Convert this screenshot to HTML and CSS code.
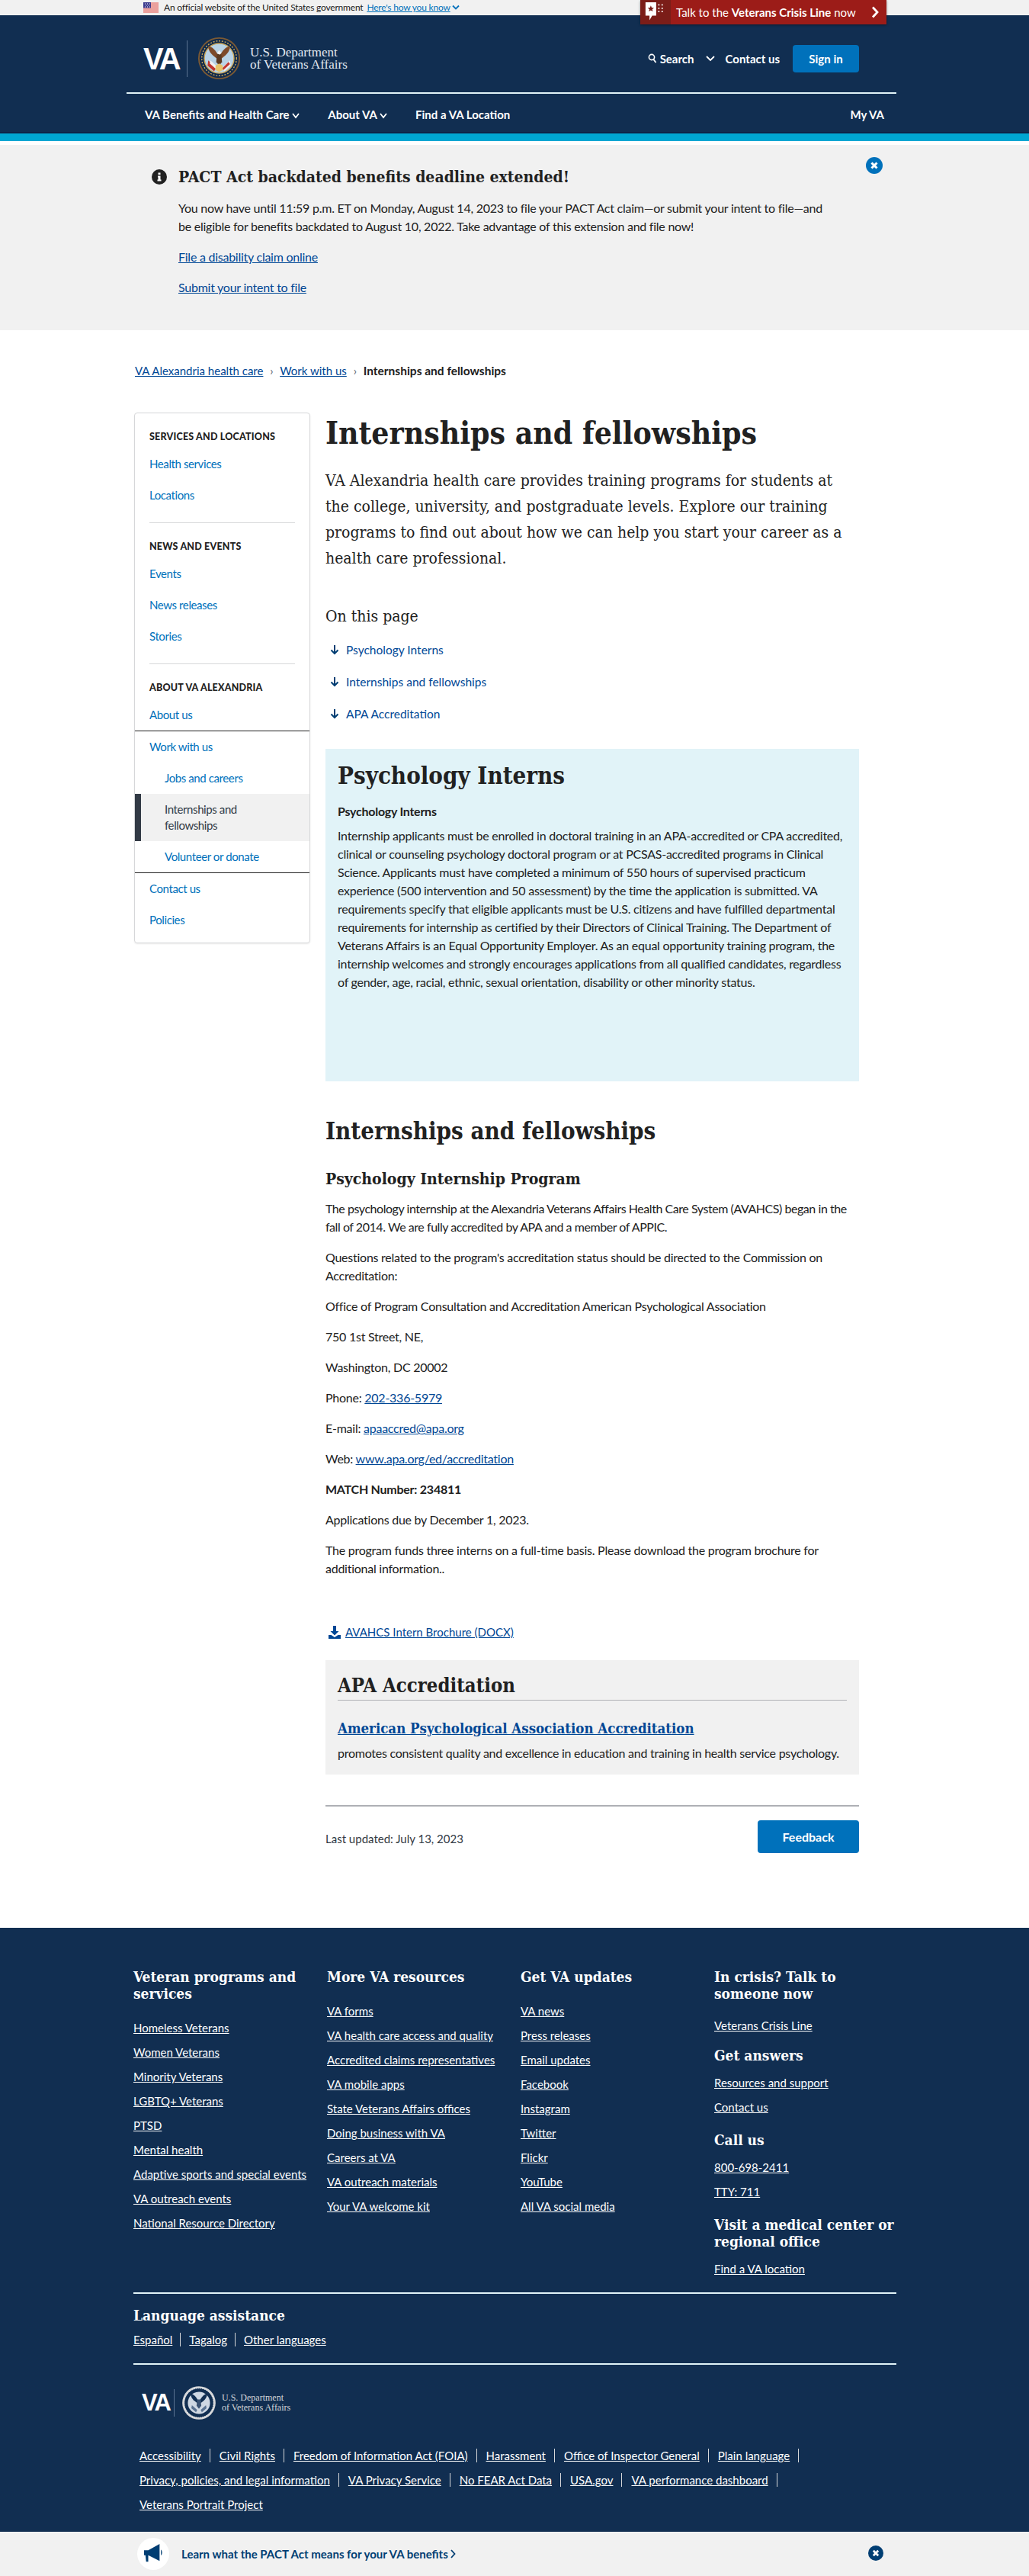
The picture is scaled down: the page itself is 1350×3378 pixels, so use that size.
FILE: index.html
```html
<!DOCTYPE html>
<html lang="en">

<head>
    <meta charset="UTF-8">
    <meta name="viewport" content="width=device-width, initial-scale=1.0">
    <title>Internships and fellowships | VA Alexandria health care</title>
    <link rel="stylesheet" href="styles.css">
</head>

<body>
    <div class="top-bar">
        <svg class="flag" viewBox="0 0 20 14" width="20" height="14">
            <rect width="20" height="14" fill="#fff"/>
            <path d="M0 1h20M0 3h20M0 5h20M0 7h20M0 9h20M0 11h20M0 13h20" stroke="#d8453d" stroke-width="1.1"/>
            <rect width="10" height="7.5" fill="#3c3b8e"/>
            <path d="M2 2h1M5 2h1M8 2h1M3.500 4h1M6.500 4h1M2 6h1M5 6h1M8 6h1" stroke="#fff" stroke-width="1"/>
        </svg>
        <span class="official">An official website of the United States government</span>
        <a class="how-know" href="#">Here's how you know</a>
        <svg class="how-chevron" viewBox="0 0 10 8" width="10" height="8"><path d="M1 1.500l4 4 4-4" fill="none" stroke="#0071bb" stroke-width="1.800"/></svg>
    </div>

    <a class="crisis" href="#">
        <span class="crisis-icon">
            <svg viewBox="0 0 32 34" width="28" height="30">
                <path d="M1 2h16v20h-6l-4 7v-7H1z" fill="#fff"/>
                <path d="M9 7l1.300 3.200 3.400.2-2.600 2.200.9 3.300L9 14l-3 1.900.9-3.300-2.600-2.200 3.400-.2z" fill="#7b1d18"/>
                <path d="M20 5h2v2h-2zM25 5h2v2h-2zM20 10h2v2h-2zM25 10h2v2h-2zM20 15h2v2h-2zM25 15h2v2h-2z" fill="#fff"/>
            </svg>
        </span>
        <span class="crisis-text">Talk to the <strong>Veterans Crisis Line</strong> now</span>
        <svg class="crisis-chevron" viewBox="0 0 10 16" width="10" height="16"><path d="M2 1.500l6 6.500-6 6.500" fill="none" stroke="#fff" stroke-width="2.800"/></svg>
    </a>

    <header class="site-header">
        <div class="head-row">
            <a class="logo" href="#">
                <span class="logo-va">VA</span>
                <span class="logo-line"></span>
                <svg class="seal" viewBox="0 0 60 60" width="57" height="57">
                    <circle cx="30" cy="30" r="29" fill="#7c5a34"/>
                    <circle cx="30" cy="30" r="27" fill="#122b4c"/>
                    <circle cx="30" cy="30" r="20.500" fill="#b9d3e6" stroke="#c9a659" stroke-width="1.500"/>
                    <circle cx="30" cy="30" r="24" fill="none" stroke="#c9a659" stroke-width="1.500" stroke-dasharray="2 2"/>
                    <path d="M28 31C22 27 15 22 15 13c5 1 11 6 14 14z" fill="#7d4a2a"/>
                    <path d="M32 31C38 27 45 22 45 13c-5 1-11 6-14 14z" fill="#7d4a2a"/>
                    <path d="M27 24h6l1 11-4 5-4-5z" fill="#5b3a22"/>
                    <path d="M27 23l3-4 3 3-2 3z" fill="#f2f2f2"/>
                    <path d="M15 33l11 10-3 5-9-8z" fill="#c1362e"/>
                    <path d="M18 33l10 9-2 3-9-8z" fill="#f2f2f2"/>
                    <path d="M45 33l-11 10 3 5 9-8z" fill="#f2f2f2"/>
                    <path d="M43 35l-9 9 2 2 9-8z" fill="#c1362e"/>
                    <path d="M30 37l5 3v6l-5 3-5-3v-6z" fill="#e7c46a"/>
                </svg>
                <span class="logo-text">U.S. Department<br>of Veterans Affairs</span>
            </a>
            <div class="head-actions">
                <a class="head-link search-link" href="#">
                    <svg viewBox="0 0 12 14" width="12" height="14"><circle cx="5" cy="5" r="3.600" fill="none" stroke="#fff" stroke-width="1.600"/><path d="M7.500 8l3 4" stroke="#fff" stroke-width="1.800"/></svg>
                    Search
                    <svg class="search-chev" viewBox="0 0 12 8" width="12" height="8"><path d="M1 1l5 5 5-5" fill="none" stroke="#fff" stroke-width="1.800"/></svg>
                </a>
                <a class="head-link" href="#">Contact us</a>
                <a class="sign-in" href="#">Sign in</a>
            </div>
        </div>
        <nav class="main-nav">
            <a href="#">VA Benefits and Health Care <svg viewBox="0 0 10 8" width="10" height="8"><path d="M1 1l4 5 4-5" fill="none" stroke="#fff" stroke-width="1.800"/></svg></a>
            <a href="#">About VA <svg viewBox="0 0 10 8" width="10" height="8"><path d="M1 1l4 5 4-5" fill="none" stroke="#fff" stroke-width="1.800"/></svg></a>
            <a href="#">Find a VA Location</a>
            <a class="my-va" href="#">My VA</a>
        </nav>
    </header>
    <div class="stripe"></div>

    <section class="alert">
        <svg class="alert-info" viewBox="0 0 20 20" width="20" height="20">
            <circle cx="10" cy="10" r="10" fill="#212121"/>
            <path d="M8.500 4.500h3v2.500h-3zM8 8.500h3.500v5h1V15.500H7.500v-2h1v-3H8z" fill="#fff"/>
        </svg>
        <div class="alert-body">
            <h2 class="alert-title">PACT Act backdated benefits deadline extended!</h2>
            <p class="alert-text">You now have until 11:59 p.m. ET on Monday, August 14, 2023 to file your PACT Act claim—or submit your intent to file—and be eligible for benefits backdated to August 10, 2022. Take advantage of this extension and file now!</p>
            <p class="alert-link"><a href="#">File a disability claim online</a></p>
            <p class="alert-link"><a href="#">Submit your intent to file</a></p>
        </div>
        <svg class="close-icon alert-close" viewBox="0 0 22 22" width="22" height="22">
            <circle cx="11" cy="11" r="11" fill="#0071bb"/>
            <path d="M7.500 7.500l7 7M14.500 7.500l-7 7" stroke="#fff" stroke-width="3"/>
        </svg>
    </section>

    <nav class="breadcrumb">
        <a href="#">VA Alexandria health care</a>
        <span class="crumb-sep">›</span>
        <a href="#">Work with us</a>
        <span class="crumb-sep">›</span>
        <strong>Internships and fellowships</strong>
    </nav>

    <div class="page">
        <aside class="sidenav">
            <h4 class="side-head first">Services and locations</h4>
            <a class="side-link" href="#">Health services</a>
            <a class="side-link" href="#">Locations</a>
            <hr class="side-rule">
            <h4 class="side-head">News and events</h4>
            <a class="side-link" href="#">Events</a>
            <a class="side-link" href="#">News releases</a>
            <a class="side-link" href="#">Stories</a>
            <hr class="side-rule">
            <h4 class="side-head">About VA Alexandria</h4>
            <a class="side-link" href="#">About us</a>
            <div class="side-group">
                <a class="side-link" href="#">Work with us</a>
                <a class="side-link sub" href="#">Jobs and careers</a>
                <a class="side-active" href="#">Internships and<br>fellowships</a>
                <a class="side-link sub" href="#">Volunteer or donate</a>
            </div>
            <a class="side-link" href="#">Contact us</a>
            <a class="side-link" href="#">Policies</a>
        </aside>

        <main class="content">
            <h1>Internships and fellowships</h1>
            <p class="intro">VA Alexandria health care provides training programs for students at the college, university, and postgraduate levels. Explore our training programs to find out about how we can help you start your career as a health care professional.</p>

            <h3 class="on-page">On this page</h3>
            <ul class="toc">
                <li><svg viewBox="0 0 12 14" width="12" height="14"><path d="M6 1v11M1.500 7.500L6 12l4.500-4.500" fill="none" stroke="#003e73" stroke-width="2"/></svg><a href="#">Psychology Interns</a></li>
                <li><svg viewBox="0 0 12 14" width="12" height="14"><path d="M6 1v11M1.500 7.500L6 12l4.500-4.500" fill="none" stroke="#003e73" stroke-width="2"/></svg><a href="#">Internships and fellowships</a></li>
                <li><svg viewBox="0 0 12 14" width="12" height="14"><path d="M6 1v11M1.500 7.500L6 12l4.500-4.500" fill="none" stroke="#003e73" stroke-width="2"/></svg><a href="#">APA Accreditation</a></li>
            </ul>

            <section class="blue-box">
                <h2>Psychology Interns</h2>
                <p class="box-sub">Psychology Interns</p>
                <p class="box-text">Internship applicants must be enrolled in doctoral training in an APA-accredited or CPA accredited, clinical or counseling psychology doctoral program or at PCSAS-accredited programs in Clinical Science. Applicants must have completed a minimum of 550 hours of supervised practicum experience (500 intervention and 50 assessment) by the time the application is submitted. VA requirements specify that eligible applicants must be U.S. citizens and have fulfilled departmental requirements for internship as certified by their Directors of Clinical Training. The Department of Veterans Affairs is an Equal Opportunity Employer. As an equal opportunity training program, the internship welcomes and strongly encourages applications from all qualified candidates, regardless of gender, age, racial, ethnic, sexual orientation, disability or other minority status.</p>
            </section>

            <h2 class="section-title">Internships and fellowships</h2>
            <h3 class="program-title">Psychology Internship Program</h3>
            <div class="prose">
                <p class="snug">The psychology internship at the Alexandria Veterans Affairs Health Care System (AVAHCS) began in the fall of 2014. We are fully accredited by APA and a member of APPIC.</p>
                <p>Questions related to the program's accreditation status should be directed to the Commission on Accreditation:</p>
                <p>Office of Program Consultation and Accreditation American Psychological Association</p>
                <p>750 1st Street, NE,</p>
                <p>Washington, DC 20002</p>
                <p>Phone: <a href="#">202-336-5979</a></p>
                <p>E-mail: <a href="#">apaaccred@apa.org</a></p>
                <p>Web: <a href="#">www.apa.org/ed/accreditation</a></p>
                <p><strong>MATCH Number: 234811</strong></p>
                <p>Applications due by December 1, 2023.</p>
                <p>The program funds three interns on a full-time basis. Please download the program brochure for additional information..</p>
            </div>

            <a class="download" href="#">
                <svg viewBox="0 0 16 17" width="16" height="17"><path d="M6 0h4v7h3.500L8 12.500 2.500 7H6zM0 12h3.500L8 15l4.500-3H16v5H0z" fill="#004795"/></svg>
                <span>AVAHCS Intern Brochure (DOCX)</span>
            </a>

            <section class="grey-box">
                <h2>APA Accreditation</h2>
                <a class="grey-link" href="#">American Psychological Association Accreditation</a>
                <p>promotes consistent quality and excellence in education and training in health service psychology.</p>
            </section>

            <hr class="end-rule">
            <div class="updated-row">
                <span class="updated">Last updated: July 13, 2023</span>
                <a class="feedback" href="#">Feedback</a>
            </div>
        </main>
    </div>

    <footer class="site-footer">
        <div class="foot-inner">
            <div class="foot-cols">
                <div>
                    <h3 class="foot-head">Veteran programs and services</h3>
                    <ul class="foot-list">
                        <li><a href="#">Homeless Veterans</a></li>
                        <li><a href="#">Women Veterans</a></li>
                        <li><a href="#">Minority Veterans</a></li>
                        <li><a href="#">LGBTQ+ Veterans</a></li>
                        <li><a href="#">PTSD</a></li>
                        <li><a href="#">Mental health</a></li>
                        <li><a href="#">Adaptive sports and special events</a></li>
                        <li><a href="#">VA outreach events</a></li>
                        <li><a href="#">National Resource Directory</a></li>
                    </ul>
                </div>
                <div>
                    <h3 class="foot-head">More VA resources</h3>
                    <ul class="foot-list">
                        <li><a href="#">VA forms</a></li>
                        <li><a href="#">VA health care access and quality</a></li>
                        <li><a href="#">Accredited claims representatives</a></li>
                        <li><a href="#">VA mobile apps</a></li>
                        <li><a href="#">State Veterans Affairs offices</a></li>
                        <li><a href="#">Doing business with VA</a></li>
                        <li><a href="#">Careers at VA</a></li>
                        <li><a href="#">VA outreach materials</a></li>
                        <li><a href="#">Your VA welcome kit</a></li>
                    </ul>
                </div>
                <div>
                    <h3 class="foot-head">Get VA updates</h3>
                    <ul class="foot-list">
                        <li><a href="#">VA news</a></li>
                        <li><a href="#">Press releases</a></li>
                        <li><a href="#">Email updates</a></li>
                        <li><a href="#">Facebook</a></li>
                        <li><a href="#">Instagram</a></li>
                        <li><a href="#">Twitter</a></li>
                        <li><a href="#">Flickr</a></li>
                        <li><a href="#">YouTube</a></li>
                        <li><a href="#">All VA social media</a></li>
                    </ul>
                </div>
                <div>
                    <h3 class="foot-head">In crisis? Talk to someone now</h3>
                    <ul class="foot-list tight">
                        <li><a href="#">Veterans Crisis Line</a></li>
                    </ul>
                    <h3 class="foot-head answers">Get answers</h3>
                    <ul class="foot-list short">
                        <li><a href="#">Resources and support</a></li>
                        <li><a href="#">Contact us</a></li>
                    </ul>
                    <h3 class="foot-head later">Call us</h3>
                    <ul class="foot-list short">
                        <li><a href="#">800-698-2411</a></li>
                        <li><a href="#">TTY: 711</a></li>
                    </ul>
                    <h3 class="foot-head later">Visit a medical center or regional office</h3>
                    <ul class="foot-list short">
                        <li><a href="#">Find a VA location</a></li>
                    </ul>
                </div>
            </div>

            <div class="language">
                <h3 class="foot-head">Language assistance</h3>
                <div class="lang-links">
                    <a href="#">Español</a>
                    <a href="#">Tagalog</a>
                    <a href="#">Other languages</a>
                </div>
            </div>

            <a class="foot-logo" href="#">
                <span class="foot-va">VA</span>
                <span class="foot-line"></span>
                <svg viewBox="0 0 60 60" width="46" height="46">
                    <circle cx="30" cy="30" r="28.500" fill="#d6d7d9"/>
                    <circle cx="30" cy="30" r="25" fill="#112e51" stroke="#fff" stroke-width="1" stroke-dasharray="2 1.500"/>
                    <circle cx="30" cy="30" r="19" fill="#cfd8e3"/>
                    <path d="M28 31C22 27 16 22 16 14c5 1 10 6 13 13z" fill="#112e51"/>
                    <path d="M32 31C38 27 44 22 44 14c-5 1-10 6-13 13z" fill="#112e51"/>
                    <path d="M27 24h6l1 11-4 5-4-5z" fill="#3a5373"/>
                    <path d="M18 34l9 8-2 4-8-7zM42 34l-9 8 2 4 8-7z" fill="#5b7392"/>
                </svg>
                <span class="foot-logo-text">U.S. Department<br>of Veterans Affairs</span>
            </a>

            <ul class="legal">
                <li><a href="#">Accessibility</a></li>
                <li><a href="#">Civil Rights</a></li>
                <li><a href="#">Freedom of Information Act (FOIA)</a></li>
                <li><a href="#">Harassment</a></li>
                <li><a href="#">Office of Inspector General</a></li>
                <li><a href="#">Plain language</a></li>
                <li><a href="#">Privacy, policies, and legal information</a></li>
                <li><a href="#">VA Privacy Service</a></li>
                <li><a href="#">No FEAR Act Data</a></li>
                <li><a href="#">USA.gov</a></li>
                <li><a href="#">VA performance dashboard</a></li>
                <li class="last"><a href="#">Veterans Portrait Project</a></li>
            </ul>
        </div>
    </footer>

    <div class="promo">
        <span class="promo-icon">
            <svg viewBox="0 0 28 30" width="26" height="28">
                <path d="M1 10h6L23 1v24L7 17v9h-3l-1-9H1z" fill="#003e73"/>
                <path d="M25 9c2 1 2 7 0 8z" fill="#003e73"/>
            </svg>
        </span>
        <a class="promo-text" href="#">Learn what the PACT Act means for your VA benefits <svg viewBox="0 0 7 12" width="7" height="12"><path d="M1 1l4.500 5L1 11" fill="none" stroke="#003e73" stroke-width="1.800"/></svg></a>
        <svg class="close-icon promo-close" viewBox="0 0 22 22" width="20" height="20">
            <circle cx="11" cy="11" r="11" fill="#003e73"/>
            <path d="M7.500 7.500l7 7M14.500 7.500l-7 7" stroke="#fff" stroke-width="3"/>
        </svg>
    </div>
</body>

</html>
```

FILE: styles.css
```css
* {
    box-sizing: border-box;
}

body {
    margin: 0;
    position: relative;
    background-color: #fff;
    color: #212121;
    font-family: Lato, "Liberation Sans", sans-serif;
    font-size: 16px;
    line-height: 24px;
}

h1, h2, h3, h4, p, ul {
    margin: 0;
    padding: 0;
}

ul {
    list-style: none;
}

a {
    color: #004795;
}

h1, h2, h3, .grey-link {
    font-family: "DejaVu Serif Condensed", "DejaVu Serif", serif;
}

/* top strip and crisis button */
.top-bar {
    height: 20px;
    padding-left: 188px;
    display: flex;
    align-items: center;
    background-color: #f1f1f1;
    font-size: 12px;
    letter-spacing: -0.2px;
}

.flag {
    margin-right: 7px;
}

.how-know {
    margin-left: 5px;
    color: #0071bb;
}

.how-chevron {
    margin-left: 2px;
}

.crisis {
    position: absolute;
    top: 0;
    left: 840px;
    width: 323px;
    height: 32px;
    display: flex;
    align-items: center;
    background-color: #9c1c18;
    color: #fff;
    font-size: 15px;
    text-decoration: none;
    box-shadow: 0 1px 3px rgba(0, 0, 0, 0.4);
}

.crisis-icon {
    width: 40px;
    height: 32px;
    margin-right: 7px;
    display: flex;
    align-items: center;
    justify-content: center;
    background-color: #7b1d18;
}

.crisis-chevron {
    margin-left: auto;
    margin-right: 10px;
}

/* header */
.site-header {
    height: 155px;
    background-color: #112e51;
    border-bottom: 2px solid #0e2447;
}

.head-row {
    width: 1010px;
    height: 103px;
    margin-left: 166px;
    padding: 12px 49px 0 22px;
    display: flex;
    align-items: center;
    justify-content: space-between;
    border-bottom: 2px solid #e1f3f8;
}

.logo {
    display: flex;
    align-items: center;
    color: #fff;
    text-decoration: none;
}

.logo-va {
    width: 57px;
    font-family: "Liberation Sans", sans-serif;
    font-size: 40px;
    font-weight: bold;
    letter-spacing: -3px;
}

.logo-line {
    width: 1px;
    height: 48px;
    margin-right: 13px;
    background-color: #5b7392;
}

.logo-text {
    margin-left: 12px;
    font-family: "Liberation Serif", serif;
    font-size: 17px;
    line-height: 16px;
    color: #e1e9f2;
}

.head-actions {
    display: flex;
    align-items: center;
    color: #fff;
}

.head-link {
    color: #fff;
    font-size: 15px;
    font-weight: bold;
    text-decoration: none;
}

.search-link {
    margin-right: 14px;
    display: flex;
    align-items: center;
    gap: 4px;
}

.search-chev {
    margin-left: 11px;
}

.sign-in {
    width: 87px;
    height: 36px;
    margin-left: 17px;
    display: flex;
    align-items: center;
    justify-content: center;
    border-radius: 4px;
    background-color: #0071bb;
    color: #fff;
    font-size: 15px;
    font-weight: bold;
    text-decoration: none;
}

.main-nav {
    width: 1010px;
    margin-left: 166px;
    padding: 15px 16px 0 24px;
    display: flex;
    gap: 37px;
}

.main-nav a {
    color: #fff;
    font-size: 15px;
    font-weight: bold;
    text-decoration: none;
}

.main-nav .my-va {
    margin-left: auto;
}

.stripe {
    height: 10px;
    background-color: #00a6d2;
}

/* alert */
.alert {
    height: 243px;
    margin-top: 5px;
    padding: 32px 0 0 199px;
    display: flex;
    position: relative;
    background-color: #f1f1f1;
}

.alert-info {
    margin-right: 15px;
    flex-shrink: 0;
}

.alert-title {
    font-size: 21px;
    line-height: 20px;
}

.alert-text {
    width: 860px;
    margin-top: 19px;
    letter-spacing: -0.25px;
}

.alert-link {
    margin-top: 16px;
    letter-spacing: -0.25px;
}

.alert-close {
    position: absolute;
    top: 16px;
    left: 1136px;
}

/* breadcrumb */
.breadcrumb {
    margin-top: 41px;
    padding-left: 177px;
    font-size: 15px;
}

.breadcrumb strong {
    font-size: 15.500px;
}

.crumb-sep {
    margin: 0 5px;
    color: #5b616b;
}

/* page columns */
.page {
    margin: 37px 0 0 176px;
    display: flex;
    align-items: flex-start;
    gap: 20px;
}

.sidenav {
    width: 231px;
    margin-top: 6px;
    padding-bottom: 9px;
    border: 1px solid #d6d7d9;
    border-radius: 4px;
    box-shadow: 0 1px 2px rgba(0, 0, 0, 0.08);
    font-size: 15px;
    letter-spacing: -0.4px;
}

.side-head {
    margin: 21px 0 5px 19px;
    color: #212121;
    font-family: Lato, sans-serif;
    font-size: 12.500px;
    line-height: 20px;
    font-weight: 900;
    letter-spacing: 0.2px;
    text-transform: uppercase;
}

.side-link {
    display: block;
    height: 41px;
    padding-left: 19px;
    color: #0071bb;
    line-height: 41px;
    text-decoration: none;
}

.side-link.sub {
    padding-left: 39px;
}

.side-rule {
    width: 191px;
    height: 1px;
    margin: 15px 0 0 19px;
    border: none;
    background-color: #d6d7d9;
}

.side-group {
    border-top: 1px solid #212121;
    border-bottom: 1px solid #212121;
}

.side-active {
    display: block;
    padding: 10px 0 10px 31px;
    border-left: 8px solid #323a45;
    background-color: #f1f1f1;
    color: #323a45;
    line-height: 21px;
    text-decoration: none;
}

/* main column */
.content {
    width: 700px;
    padding-top: 9px;
}

h1 {
    font-size: 40.500px;
    line-height: 48px;
}

.intro {
    margin-top: 21px;
    font-family: "DejaVu Serif Condensed", "DejaVu Serif", serif;
    font-size: 21px;
    line-height: 34px;
}

.on-page {
    margin-top: 44px;
    font-size: 21px;
    line-height: 30px;
    font-weight: normal;
}

.toc {
    margin-top: 17px;
}

.toc li {
    height: 24px;
    margin-bottom: 18px;
    padding-left: 6px;
    display: flex;
    align-items: center;
    gap: 9px;
    font-size: 15.500px;
}

.toc a {
    text-decoration: none;
}

.blue-box {
    height: 436px;
    margin-top: 34px;
    padding: 15px 16px 0;
    background-color: #e1f3f8;
}

.blue-box h2 {
    font-size: 31px;
    line-height: 40px;
}

.box-sub {
    margin-top: 15px;
    font-weight: bold;
    letter-spacing: -0.25px;
}

.box-text {
    margin-top: 8px;
    letter-spacing: -0.25px;
}

.section-title {
    margin-top: 45px;
    font-size: 31px;
    line-height: 40px;
}

.program-title {
    margin-top: 28px;
    font-size: 21px;
    line-height: 30px;
}

.prose {
    margin-top: 12px;
    letter-spacing: -0.25px;
}

.prose p {
    margin-bottom: 16px;
}

.prose .snug {
    letter-spacing: -0.45px;
}

.download {
    margin: 59px 0 0 4px;
    display: flex;
    align-items: center;
    gap: 6px;
    font-size: 15px;
}

.grey-box {
    margin-top: 25px;
    padding: 17px 16px 16px;
    background-color: #f1f1f1;
}

.grey-box h2 {
    padding-bottom: 3px;
    border-bottom: 1px solid #aeb0b5;
    font-size: 25.500px;
    line-height: 32px;
}

.grey-link {
    display: block;
    margin-top: 23px;
    font-size: 18.500px;
    font-weight: bold;
    line-height: 28px;
}

.grey-box p {
    margin-top: 6px;
    letter-spacing: -0.25px;
}

.end-rule {
    height: 2px;
    margin: 40px 0 0;
    border: none;
    background-color: #aeb0b5;
}

.updated-row {
    margin: 18px 0 98px;
    display: flex;
    align-items: center;
    justify-content: space-between;
}

.updated {
    color: #323a45;
    padding-top: 5px;
    font-size: 15px;
}

.feedback {
    width: 133px;
    height: 43px;
    display: flex;
    align-items: center;
    justify-content: center;
    border-radius: 4px;
    background-color: #0071bb;
    color: #fff;
    font-weight: bold;
    text-decoration: none;
}

/* footer */
.site-footer {
    height: 792px;
    background-color: #112e51;
    color: #fff;
}

.site-footer a {
    color: #fff;
}

.foot-inner {
    width: 1001px;
    margin-left: 175px;
    padding-top: 53px;
}

.foot-cols {
    padding-bottom: 15px;
    display: grid;
    grid-template-columns: repeat(4, 254px);
    grid-template-rows: auto;
    width: 1016px;
}

.foot-cols > div:last-child {
    width: 240px;
}

.foot-head {
    font-size: 19px;
    line-height: 22px;
    font-weight: bold;
    color: #fff;
}

.foot-list {
    margin-top: 18px;
    font-size: 15px;
}

.foot-list li {
    height: 32px;
    line-height: 32px;
    white-space: nowrap;
}

.foot-list.tight {
    margin-top: 15px;
}

.foot-list.short {
    margin-top: 9px;
}

.foot-head.answers {
    margin-top: 12px;
}

.foot-head.later {
    margin-top: 16px;
}

.language {
    padding: 17px 0 19px;
    border-top: 2px solid #e1f3f8;
    border-bottom: 2px solid #e1f3f8;
}

.lang-links {
    margin-top: 9px;
    display: flex;
    font-size: 15px;
}

.lang-links a {
    padding-right: 11px;
    margin-right: 11px;
    position: relative;
}

.lang-links a:not(:last-child)::after {
    content: "";
    position: absolute;
    top: 3px;
    right: 0;
    width: 1px;
    height: 18px;
    background-color: #d6d7d9;
}

.foot-logo {
    margin: 26px 0 0 11px;
    display: flex;
    align-items: center;
    height: 47px;
    text-decoration: none;
}

.foot-va {
    width: 42px;
    font-family: "Liberation Sans", sans-serif;
    font-size: 31px;
    font-weight: bold;
    letter-spacing: -2px;
}

.foot-line {
    width: 1px;
    height: 36px;
    margin-right: 9px;
    background-color: #5b7392;
}

.foot-logo-text {
    margin-left: 7px;
    font-family: "Liberation Serif", serif;
    font-size: 12px;
    line-height: 13px;
    color: #d6d7d9;
}

.legal {
    margin-top: 30px;
    padding-left: 8px;
    display: flex;
    flex-wrap: wrap;
    font-size: 15px;
}

.legal li {
    height: 32px;
    padding-right: 12px;
    margin-right: 12px;
    line-height: 32px;
    position: relative;
}

.legal li:not(.last)::after {
    content: "";
    position: absolute;
    top: 7px;
    right: 0;
    width: 1px;
    height: 18px;
    background-color: #d6d7d9;
}

/* bottom banner */
.promo {
    height: 58px;
    padding-left: 180px;
    display: flex;
    align-items: center;
    position: relative;
    background-color: #f1f1f1;
}

.promo-icon {
    width: 42px;
    height: 42px;
    margin-right: 16px;
    display: flex;
    align-items: center;
    justify-content: center;
    border-radius: 50%;
    background-color: #fff;
}

.promo-text {
    color: #003e73;
    font-size: 15px;
    font-weight: bold;
    text-decoration: none;
}

.promo-close {
    position: absolute;
    top: 18px;
    left: 1139px;
}
```
